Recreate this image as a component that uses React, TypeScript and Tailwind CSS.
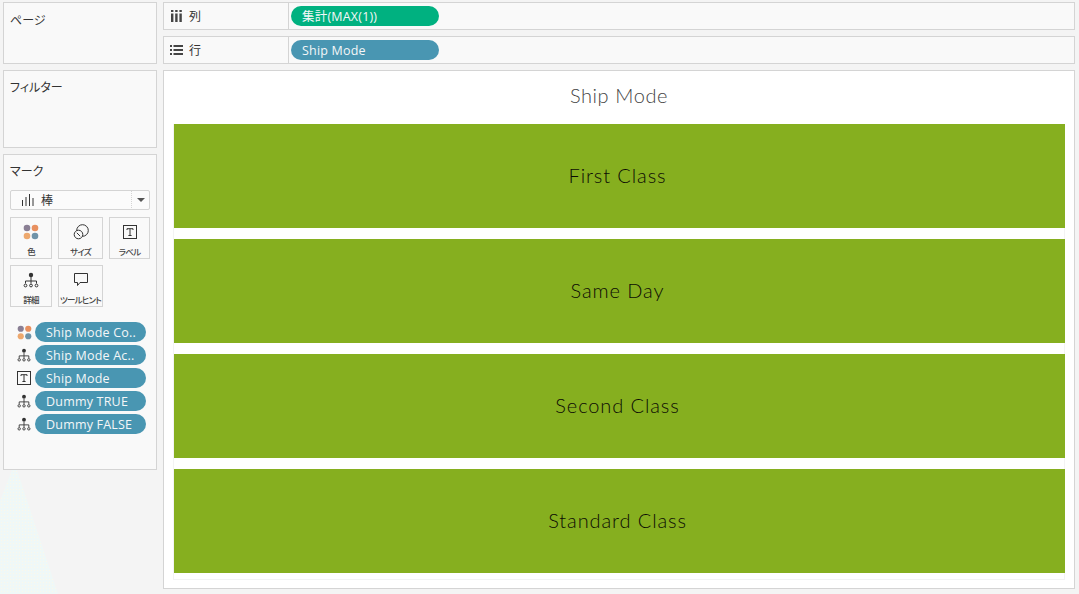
const cjk = "font-['Open_Sans','Noto_Sans_CJK_JP',sans-serif] [font-feature-settings:'palt']";

const ColorIcon = ({ size = 16 }: { size?: number }) => (
  <svg width={size} height={size} viewBox="0 0 16 16">
    <circle cx="4" cy="4" r="3.3" fill="#8a7f94" />
    <circle cx="12" cy="4" r="3.3" fill="#e8905f" />
    <circle cx="4" cy="12" r="3.3" fill="#eda86e" />
    <circle cx="12" cy="12" r="3.3" fill="#6f93a8" />
  </svg>
);

const DetailIcon = ({ size = 16 }: { size?: number }) => (
  <svg width={size} height={size} viewBox="0 0 16 16" fill="none" stroke="#333" strokeWidth="1">
    <circle cx="8" cy="3" r="2.2" fill="#333" stroke="none" />
    <path d="M8 5v4M2.5 11.5V9h11v2.5M8 9v2.5" />
    <circle cx="2.5" cy="13.5" r="1.4" />
    <circle cx="8" cy="13.5" r="1.4" />
    <circle cx="13.5" cy="13.5" r="1.4" />
  </svg>
);

const TextIcon = ({ size = 14 }: { size?: number }) => (
  <svg width={size} height={size} viewBox="0 0 14 14" fill="none" stroke="#333" strokeWidth="1">
    <rect x="0.5" y="0.5" width="13" height="13" />
    <path d="M4 5V3.7h6V5M7 3.7v6.8M5.4 10.5h3.2" />
  </svg>
);

const SizeIcon = () => (
  <svg width="16" height="16" viewBox="0 0 16 16" fill="none" stroke="#333" strokeWidth="1">
    <circle cx="9.5" cy="6.5" r="5.8" fill="#f9f9f9" />
    <circle cx="5.5" cy="10.5" r="4.3" fill="#f9f9f9" />
    <path d="M3.8 8.8l3.4 3.4" />
  </svg>
);

const TooltipIcon = () => (
  <svg width="16" height="15" viewBox="0 0 16 15" fill="none" stroke="#333" strokeWidth="1">
    <path d="M1.5 1.5h13v9H7l-2.5 3v-3h-3z" />
  </svg>
);

const MarkCard = ({ label, width, children }: { label: string; width: string; children: React.ReactNode }) => (
  <div className={`flex h-[42px] ${width} flex-col items-center border border-[#d4d4d4] pt-[5px]`}>
    <div className="flex h-[17px] items-center justify-center">{children}</div>
    <span className={`mt-[6px] text-[8.5px] leading-[11px] font-medium tracking-[-0.8px] whitespace-nowrap text-[#444] ${cjk}`}>{label}</span>
  </div>
);

const Pill = ({ label, color = 'bg-[#4996b2]', width = 'w-[148px]' }: { label: string; color?: string; width?: string }) => (
  <div className={`flex h-[20px] ${width} items-center rounded-full ${color} pt-[2px] pl-[11px] text-[12.5px] tracking-[0.2px] whitespace-nowrap text-[#f4f7f8] ${cjk}`}>
    {label}
  </div>
);

const markFields = [
  { icon: <ColorIcon size={15} />, label: 'Ship Mode Co..' },
  { icon: <DetailIcon size={14} />, label: 'Ship Mode Ac..' },
  { icon: <TextIcon size={14} />, label: 'Ship Mode' },
  { icon: <DetailIcon size={14} />, label: 'Dummy TRUE' },
  { icon: <DetailIcon size={14} />, label: 'Dummy FALSE' },
];

const bars = ['First Class', 'Same Day', 'Second Class', 'Standard Class'];

const Shelf = ({ icon, label, pill }: { icon: React.ReactNode; label: string; pill: React.ReactNode }) => (
  <div className="flex h-[28px] border border-[#d4d4d4] bg-[#f9f9f9]">
    <div className="flex w-[125px] items-center border-r border-[#d4d4d4] pl-[6px]">
      <span className="flex w-[13px] justify-center">{icon}</span>
      <span className={`ml-[6px] pt-px text-[12px] text-[#333] ${cjk}`}>{label}</span>
    </div>
    <div className="flex items-center pl-[2px]">{pill}</div>
  </div>
);

export default function App() {
  return (
    <div className="relative flex h-[594px] w-[1079px] gap-[6px] overflow-hidden bg-[#f4f4f4] pt-[2px] pl-[3px]">
      {/* faint dither left behind in the capture */}
      <div className="absolute top-[470px] left-0 h-[124px] w-[58px] bg-[radial-gradient(#fbf8ea_1px,#eff8f7_1px)] bg-[length:3px_3px] [clip-path:polygon(12px_0,17px_0,58px_100%,0_100%,0_25%)]" />

      <aside className="relative flex w-[154px] flex-col gap-[6px]">
        <section className={`h-[62px] border border-[#d4d4d4] bg-[#f9f9f9] pt-[9px] pl-[6px] text-[12px] text-[#333] ${cjk}`}>
          ページ
        </section>
        <section className={`h-[78px] border border-[#d4d4d4] bg-[#f9f9f9] pt-[8px] pl-[6px] text-[12px] text-[#333] ${cjk}`}>
          フィルター
        </section>
        <section className="h-[316px] border border-[#d4d4d4] bg-[#f9f9f9]">
          <div className={`pt-[8px] pl-[6px] text-[12px] leading-[18px] text-[#333] ${cjk}`}>マーク</div>
          <div className="mt-[9px] ml-[6px] flex h-[20px] w-[140px] items-center rounded-[2px] border border-[#d4d4d4] bg-[#fbfbfb]">
            <div className="flex flex-1 items-center border-r border-dotted border-[#d4d4d4] pl-[11px]">
              <svg width="12" height="12" viewBox="0 0 12 12" fill="none" stroke="#333" strokeWidth="1">
                <path d="M0.5 12V6M4 12V3M7.5 12V0M11 12V4" />
              </svg>
              <span className={`ml-[7px] pt-px text-[12px] leading-[18px] text-[#333] ${cjk}`}>棒</span>
            </div>
            <div className="flex w-[17px] justify-center">
              <div className="h-0 w-0 border-x-[4px] border-t-[4px] border-x-transparent border-t-[#555]" />
            </div>
          </div>
          <div className="mt-[7px] ml-[6px] flex w-[140px] flex-wrap gap-[6px]">
            <MarkCard label="色" width="w-[42px]"><ColorIcon /></MarkCard>
            <MarkCard label="サイズ" width="w-[45px]"><SizeIcon /></MarkCard>
            <MarkCard label="ラベル" width="w-[41px]"><TextIcon /></MarkCard>
            <MarkCard label="詳細" width="w-[42px]"><DetailIcon /></MarkCard>
            <MarkCard label="ツールヒント" width="w-[45px]"><TooltipIcon /></MarkCard>
          </div>
          <ul className="mt-[15px] flex flex-col gap-[3px] pl-[13px]">
            {markFields.map((field, i) => (
              <li key={i} className="flex items-center">
                <span className="flex w-[18px] justify-start">{field.icon}</span>
                <Pill label={field.label} width="w-[111px]" />
              </li>
            ))}
          </ul>
        </section>
      </aside>

      <main className="relative flex w-[912px] flex-col gap-[6px]">
        <Shelf
          label="列"
          pill={<Pill label="集計(MAX(1))" color="bg-[#00b180]" />}
          icon={
            <svg width="11" height="12" viewBox="0 0 11 12" fill="#444">
              <rect x="0" y="3.5" width="2.4" height="8.5" />
              <rect x="4.2" y="3.5" width="2.4" height="8.5" />
              <rect x="8.4" y="3.5" width="2.4" height="8.5" />
              <rect x="0" y="0" width="2.4" height="2" />
              <rect x="4.2" y="0" width="2.4" height="2" />
              <rect x="8.4" y="0" width="2.4" height="2" />
            </svg>
          }
        />
        <Shelf
          label="行"
          pill={<Pill label="Ship Mode" />}
          icon={
            <svg width="13" height="11" viewBox="0 0 13 11" fill="#444">
              <rect x="0" y="0" width="2" height="2" />
              <rect x="3.5" y="0" width="9.5" height="2" />
              <rect x="0" y="4" width="2" height="2" />
              <rect x="3.5" y="4" width="9.5" height="2" />
              <rect x="0" y="8" width="2" height="2" />
              <rect x="3.5" y="8" width="9.5" height="2" />
            </svg>
          }
        />
        <section className="h-[519px] border border-[#d4d4d4] bg-white">
          <h1 className="h-[53px] pt-[10px] text-center font-['Lato',sans-serif] text-[20px] leading-[28px] font-light tracking-[0.6px] text-[#444]">
            Ship Mode
          </h1>
          <div className="mx-[9px] flex h-[456px] flex-col gap-[11px] border-r border-b border-l border-[#f3f3f3] pb-[6px]">
            {bars.map((bar) => (
              <div
                key={bar}
                className="flex h-[104px] w-[891px] shrink-0 items-center justify-center bg-[#86af1f] pr-[4px] pb-[2px] font-['Lato',sans-serif] text-[20px] font-light tracking-[0.9px] text-[#0c0c04]"
              >
                {bar}
              </div>
            ))}
          </div>
        </section>
      </main>
    </div>
  );
}
